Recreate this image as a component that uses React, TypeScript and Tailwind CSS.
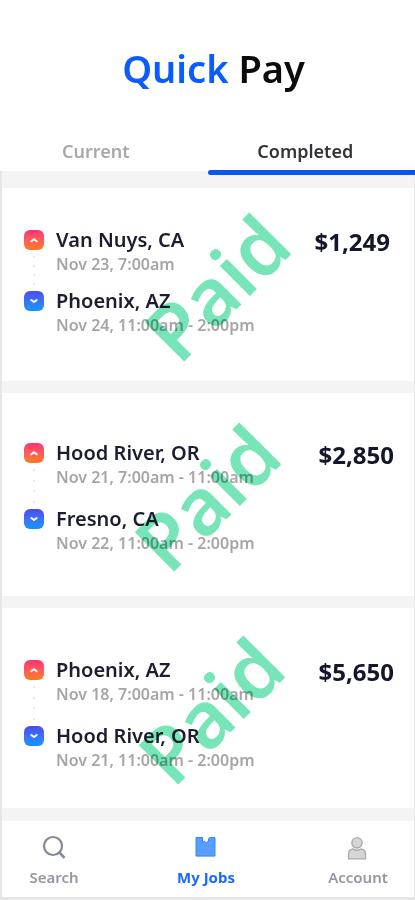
import { useState } from "react";

type Stop = { place: string; time: string };
type Job = {
  from: Stop;
  to: Stop;
  amount: string;
  cardClass: string;
  gapClass: string;
  amountClass: string;
  stampClass: string;
};

const jobs: Job[] = [
  {
    from: { place: "Van Nuys, CA", time: "Nov 23, 7:00am" },
    to: { place: "Phoenix, AZ", time: "Nov 24, 11:00am - 2:00pm" },
    amount: "$1,249",
    cardClass: "pt-10 pb-11",
    gapClass: "pb-[13px]",
    amountClass: "pr-6",
    stampClass: "pl-4",
  },
  {
    from: { place: "Hood River, OR", time: "Nov 21, 7:00am - 11:00am" },
    to: { place: "Fresno, CA", time: "Nov 22, 11:00am - 2:00pm" },
    amount: "$2,850",
    cardClass: "pt-12 pb-[41px]",
    gapClass: "pb-[18px]",
    amountClass: "pr-5",
    stampClass: "pr-1",
  },
  {
    from: { place: "Phoenix, AZ", time: "Nov 18, 7:00am - 11:00am" },
    to: { place: "Hood River, OR", time: "Nov 21, 11:00am - 2:00pm" },
    amount: "$5,650",
    cardClass: "pt-[50px] pb-9",
    gapClass: "pb-[18px]",
    amountClass: "pr-5",
    stampClass: "pl-1",
  },
];

function StopMarker({ kind }: { kind: "pickup" | "dropoff" }) {
  const pickup = kind === "pickup";
  return (
    <span
      className={
        pickup
          ? "my-0.5 flex size-5 items-center justify-center rounded-md bg-linear-to-b from-[#ff2d78] to-[#ff7a10]"
          : "my-0.5 flex size-5 items-center justify-center rounded-md bg-linear-to-b from-[#4a49ec] to-[#0096ff]"
      }
    >
      <svg viewBox="0 0 20 20" className="size-5" fill="none" stroke="#fff" strokeWidth="2" strokeLinecap="round" strokeLinejoin="round" aria-hidden="true">
        <path d={pickup ? "M7.3 11.3 10 9.3l2.7 2" : "M7.3 9 10 11l2.7-2"} />
      </svg>
    </span>
  );
}

function StopRow({ stop, kind, gapClass }: { stop: Stop; kind: "pickup" | "dropoff"; gapClass: string }) {
  return (
    <li className="flex gap-3">
      <div className="flex flex-col items-center">
        <StopMarker kind={kind} />
        {kind === "pickup" && (
          <div className="flex flex-1 flex-col items-center justify-around">
            {[0, 1, 2, 3].map((n) => (
              <span key={n} className="size-0.5 rounded-full bg-[#e0e0e4]" />
            ))}
          </div>
        )}
      </div>
      <div className={gapClass}>
        <p className="text-xl leading-6 font-semibold text-[#1c1e30]">{stop.place}</p>
        <p className="text-base leading-6 font-semibold text-[#a6a6a6]">{stop.time}</p>
      </div>
    </li>
  );
}

function JobCard({ job }: { job: Job }) {
  return (
    <article className={`relative flex items-start justify-between bg-white pl-[22px] ${job.cardClass}`}>
      <ol>
        <StopRow stop={job.from} kind="pickup" gapClass={job.gapClass} />
        <StopRow stop={job.to} kind="dropoff" gapClass="" />
      </ol>
      <p className={`text-2xl leading-7 font-bold text-[#14162b] ${job.amountClass}`}>{job.amount}</p>
      <div className={`pointer-events-none absolute inset-0 flex items-center justify-center pt-1 mix-blend-multiply ${job.stampClass}`}>
        <span className="-rotate-45 text-[78px] leading-none font-semibold text-[#77e5b8]">Paid</span>
      </div>
    </article>
  );
}

export default function App() {
  const [tab, setTab] = useState("Completed");
  return (
    <div className="min-h-screen bg-[#f4f4f4] font-['Noto_Sans',sans-serif]">
      <header className="bg-white pt-[43px]">
        <h1 className="pl-3 text-center text-[38px] leading-[50px] font-semibold text-[#0b0b0e]">
          <span className="text-[#0a5cff]">Quick</span> Pay
        </h1>
        <div role="tablist" className="mt-[35px] grid grid-cols-2">
          {["Current", "Completed"].map((name) => (
            <button
              key={name}
              type="button"
              role="tab"
              aria-selected={tab === name}
              onClick={() => setTab(name)}
              className={
                tab === name
                  ? "relative h-[43px] pt-0.5 pr-3 text-lg leading-6 font-semibold text-[#333338]"
                  : "relative h-[43px] pt-0.5 pr-4 text-lg leading-6 font-semibold text-[#a9a9a9]"
              }
            >
              {name}
              {tab === name && <span className="absolute inset-x-0 -bottom-1 h-[5px] rounded-l-full bg-[#0a55f5]" />}
            </button>
          ))}
        </div>
      </header>

      <main className="flex flex-col gap-3 border-r border-l-2 border-[#e6e6e6] bg-[#f4f4f4] pt-[17px] pb-[13px]">
        {jobs.map((job) => (
          <JobCard key={job.amount} job={job} />
        ))}
      </main>

      <nav className="flex justify-between border-r border-b-[3px] border-l-2 border-[#e6e6e6] bg-white pt-3 pr-2 pb-2 pl-1 text-[15px] leading-6 font-semibold text-[#9497a3]">
        <a href="#search" className="flex w-24 flex-col items-center gap-1">
          <svg viewBox="0 0 28 28" className="size-7" fill="none" stroke="#858998" strokeWidth="2.2" aria-hidden="true">
            <circle cx="13" cy="13" r="9" />
            <path d="m19.5 19.5 5 5.3" strokeWidth="2.6" />
          </svg>
          Search
        </a>
        <a href="#jobs" aria-current="page" className="flex w-24 flex-col items-center gap-1 font-bold text-[#1769ff]">
          <svg viewBox="0 0 28 28" className="size-7" fill="#589eff" stroke="#3388fa" strokeWidth="1" aria-hidden="true">
            <path d="M4 4.5h6.5v5.2l2-1.7 1.700 1.700 2.300-1.700V5.700l1.500-1.200h5v18.600H4z" />
          </svg>
          My Jobs
        </a>
        <a href="#account" className="flex w-24 flex-col items-center gap-1">
          <svg viewBox="0 0 28 28" className="size-7" fill="#d6d6d6" stroke="#aaa" strokeWidth="1.3" strokeLinejoin="round" aria-hidden="true">
            <circle cx="13" cy="9.8" r="5.2" />
            <path d="M4.5 25.8v-4.6c0-3 2-4.8 4.6-5.2 2.2 1.4 5.6 1.4 7.8 0 2.6.4 4.6 2.2 4.6 5.2v4.6z" />
          </svg>
          Account
        </a>
      </nav>
    </div>
  );
}
